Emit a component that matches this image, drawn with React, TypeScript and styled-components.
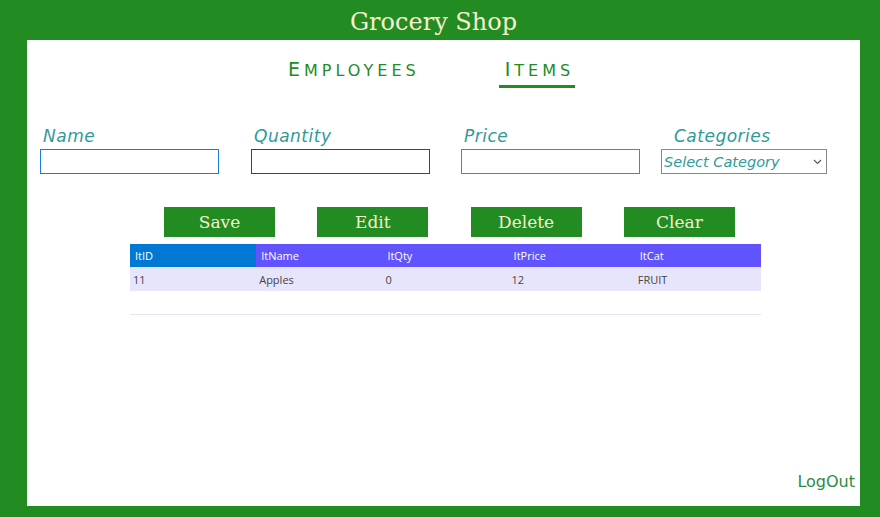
import styled, { createGlobalStyle } from "styled-components";

const GlobalStyle = createGlobalStyle`
    html, body {
        margin: 0;
        padding: 0;
        background: #228b22;
    }
    * {
        box-sizing: border-box;
    }
`

const tabs = [
    {name: "Employees", active: false},
    {name: "Items", active: true},
]

const fields = [
    {label: "Name", width: 211, focused: true},
    {label: "Quantity", width: 210, border: "#444"},
    {label: "Price", width: 200},
]

const buttons = ["Save", "Edit", "Delete", "Clear"]

const columns = ["ItID", "ItName", "ItQty", "ItPrice", "ItCat"]

const rows = [
    ["11", "Apples", "0", "12", "FRUIT"],
]

export default function App() {
    return (
        <Page>
            <GlobalStyle/>
            <Title>Grocery Shop</Title>
            <Panel>
                <Nav>
                    {tabs.map(tab => (
                        <NavItem key={tab.name} $active={tab.active}>{tab.name}</NavItem>
                    ))}
                </Nav>
                <Form>
                    {fields.map(field => (
                        <Field key={field.label} $width={field.width}>
                            <Label>{field.label}</Label>
                            <Input $focused={field.focused} $border={field.border}/>
                        </Field>
                    ))}
                    <Field $width={166}>
                        <Label $indent={13}>Categories</Label>
                        <SelectBox>
                            <Select defaultValue="">
                                <option value="">Select Category</option>
                            </Select>
                            <Chevron width="9" height="6" viewBox="0 0 9 6">
                                <path d="M1 1l3.5 3.5L8 1" fill="none" stroke="#555" strokeWidth="1.1"/>
                            </Chevron>
                        </SelectBox>
                    </Field>
                </Form>
                <Content>
                    <Buttons>
                        {buttons.map(b => <Button key={b}>{b}</Button>)}
                    </Buttons>
                    <Table>
                        <thead>
                        <tr>
                            {columns.map((c, i) => <Th key={c} $first={i === 0}>{c}</Th>)}
                        </tr>
                        </thead>
                        <tbody>
                        {rows.map((r, i) => (
                            <tr key={i}>
                                {r.map((cell, j) => <Td key={j}>{cell}</Td>)}
                            </tr>
                        ))}
                        </tbody>
                    </Table>
                    <Divider/>
                </Content>
                <LogOut>LogOut</LogOut>
            </Panel>
        </Page>
    )
}

const Page = styled.div`
    display: flex;
    flex-direction: column;
    height: 517px;
    padding: 0 20px 11px 27px;
`

const Title = styled.h1`
    margin: 0;
    height: 40px;
    line-height: 45px;
    padding-right: 20px;
    text-align: center;
    font-family: "DejaVu Serif", "Liberation Serif", serif;
    font-weight: 400;
    font-size: 24px;
    color: #f5f0d0;
`

const Panel = styled.div`
    flex: 1;
    display: flex;
    flex-direction: column;
    background: #ffffff;
    padding: 0 5px 15px 13px;
`

const Nav = styled.div`
    display: flex;
    gap: 78px;
    padding: 18px 0 0 242px;
`

const NavItem = styled.a<{ $active?: boolean }>`
    display: inline-block;
    font-family: "DejaVu Sans", "Liberation Sans", sans-serif;
    text-transform: uppercase;
    font-size: 16px;
    line-height: 22px;
    letter-spacing: 4px;
    color: #228b22;
    padding: 0 1px 3px 6px;
    border-bottom: 3px solid ${props => props.$active ? "#228b22" : "transparent"};
    cursor: pointer;

    &::first-letter {
        font-size: 19px;
    }
`

const Form = styled.div`
    display: flex;
    margin-top: 37px;
`

const Field = styled.div<{ $width: number }>`
    display: flex;
    flex-direction: column;
    width: ${props => props.$width}px;
`

const Label = styled.label<{ $indent?: number }>`
    font-family: "DejaVu Sans", "Liberation Sans", sans-serif;
    font-style: italic;
    font-size: 17px;
    letter-spacing: 0.5px;
    line-height: 22px;
    color: #2f9a9a;
    padding-left: ${props => props.$indent ?? 3}px;
`

const Input = styled.input<{ $focused?: boolean, $border?: string }>`
    width: 179px;
    height: 25px;
    border: 1px solid ${props => props.$focused ? "#1a7fd4" : props.$border ?? "#7a7a7a"};
    outline: none;
    margin-top: 2px;
`

const SelectBox = styled.div`
    position: relative;
    margin-top: 2px;
    width: 166px;
    height: 25px;
`

const Select = styled.select`
    appearance: none;
    width: 100%;
    height: 100%;
    border: 1px solid #888;
    border-radius: 0;
    background: #fff;
    font-family: "DejaVu Sans", "Liberation Sans", sans-serif;
    font-style: italic;
    font-size: 14.5px;
    color: #2f9a9a;
    padding: 0 0 0 2px;
    outline: none;
`

const Chevron = styled.svg`
    position: absolute;
    right: 5px;
    top: 10px;
    pointer-events: none;
`

const Content = styled.div`
    display: flex;
    flex-direction: column;
    width: 631px;
    margin-left: 90px;
    margin-top: 33px;
`

const Buttons = styled.div`
    display: flex;
    gap: 42.3px;
    padding-left: 34px;
`

const Button = styled.button`
    width: 111px;
    height: 30px;
    border: none;
    background: #228b22;
    color: #f5f0d0;
    font-family: "DejaVu Serif", "Liberation Serif", serif;
    font-size: 17px;
    padding: 0;
    cursor: pointer;
`

const Table = styled.table`
    margin-top: 7px;
    width: 631px;
    border-collapse: collapse;
    table-layout: fixed;
    font-family: "Open Sans", "Noto Sans", sans-serif;
    font-size: 11px;
`

const Th = styled.th<{ $first?: boolean }>`
    height: 23px;
    padding: 0 5px;
    text-align: left;
    font-weight: 400;
    color: #ffffff;
    background: ${props => props.$first ? "#0078d4" : "#6154ff"};
`

const Td = styled.td`
    height: 24px;
    padding: 0 3px;
    background: #e7e5fb;
    color: #444;
`

const Divider = styled.div`
    margin-top: 23px;
    height: 1px;
    background: #e6e6f6;
`

const LogOut = styled.a`
    margin-top: auto;
    align-self: flex-end;
    font-family: "DejaVu Sans", "Liberation Sans", sans-serif;
    font-size: 16px;
    color: #2e8b3e;
    cursor: pointer;
`
